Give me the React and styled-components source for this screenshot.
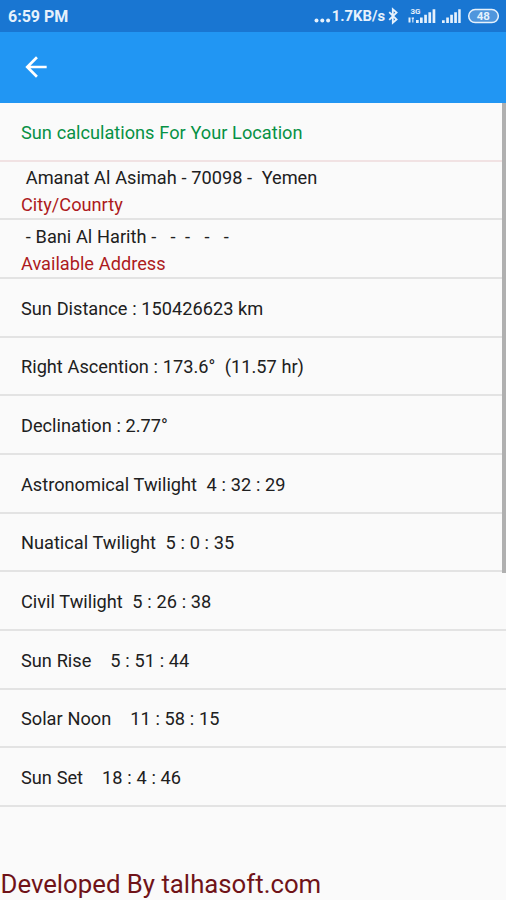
import React from 'react';
import styled, {createGlobalStyle} from 'styled-components';


const GlobalStyle = createGlobalStyle`
    body {
        margin: 0;
        background-color: #fafafa;
        font-family: Roboto, 'Liberation Sans', sans-serif;
    }
`;

const Screen = styled.div`
    display: flex;
    flex-direction: column;
    height: 900px;
    overflow: hidden;
    background-color: #fafafa;
`;

const StatusBar = styled.div`
    display: flex;
    align-items: center;
    justify-content: space-between;
    box-sizing: border-box;
    height: 32px;
    padding: 0 7px 0 8px;
    background-color: #1976d2;
    color: #e6f1fc;
    font-size: 16px;
    font-weight: 700;
    line-height: 33px;
`;

const StatusIcons = styled.div`
    display: flex;
    align-items: center;
    height: 32px;
`;

const Speed = styled.span`
    font-size: 14.8px;
    margin-right: 2px;
`;

const AppBar = styled.header`
    display: flex;
    align-items: center;
    box-sizing: border-box;
    height: 71px;
    padding: 0 20px 2px 19.5px;
    background-color: #2196f3;
`;

const BackButton = styled.button`
    display: flex;
    padding: 0;
    border: 0;
    background: none;
`;

const Content = styled.main`
    position: relative;
    flex: 1;
`;

const List = styled.ul`
    margin: 0;
    padding: 0;
    list-style: none;
`;

const Row = styled.li`
    display: flex;
    flex-direction: column;
    justify-content: center;
    box-sizing: border-box;
    height: ${({$first}) => $first ? '58.6px' : '58.67px'};
    padding: 2px 21px 0;
    border-bottom: 2px solid ${({$first}) => $first ? '#f1e2e3' : '#e3e3e3'};
`;

const Line = styled.span`
    color: ${({$color}) => $color || '#202020'};
    font-size: 18.2px;
    line-height: 27px;
    word-spacing: 0.25px;
    white-space: pre;
`;

// floats over the list, so the row dividers run to the screen edge
const ScrollThumb = styled.div`
    position: absolute;
    top: 0;
    right: 0;
    width: 4px;
    height: 470px;
    background-color: #b0b0b0;
`;

const Footer = styled.footer`
    height: 31px;
    padding-left: 0.5px;
    color: #701318;
    font-size: 25.75px;
    line-height: 31px;
    white-space: pre;
`;

const BackArrow = () => {
    return (
        <svg width="32" height="32" viewBox="0 0 24 24" fill="#fff">
            <path d="M20 11H7.83l5.59-5.59L12 4l-8 8 8 8 1.41-1.41L7.83 13H20v-2z" />
        </svg>
    )
}

const Dots = () => {
    return (
        <svg width="18" height="32" viewBox="0 0 18 32" fill="#e6f1fc">
            <circle cx="2.5" cy="20.5" r="2" />
            <circle cx="8.3" cy="20.5" r="2" />
            <circle cx="14.1" cy="20.5" r="2" />
        </svg>
    )
}

const Indicators = () => {
    return (
        <svg width="112" height="32" viewBox="387 0 112 32" fill="#e6f1fc">
            <path
                d="M389.2 12.2l7.4 7.3-3.8 3.3V9.2l3.8 3.3-7.4 7.3"
                fill="none"
                stroke="#e6f1fc"
                strokeWidth="1.8"
            />
            <text x="410.5" y="14" fontSize="8" fontWeight="700">3G</text>
            <path d="M408.5 17.5h2v5h-2zM411.7 17.5h2.3v1.2h-.6v3.8h-1.1v-3.8h-.6z" />
            <path d="M416 20h2.7v3H416zM420 17.5h2.7V23H420zM424.2 14.8h2.7V23h-2.7zM428.4 12.2h2.7V23h-2.7zM432.6 9.3h2.7V23h-2.7z" />
            <path d="M442 20.2h2.7V23H442zM446.2 17.5h2.7V23h-2.7zM450.2 14.8h2.7V23h-2.7zM454.2 12.2h2.7V23h-2.7zM458.2 9.3h2.5V23h-2.5z" />
            <rect
                x="468.7"
                y="9.6"
                width="29.6"
                height="13"
                rx="6.5"
                fill="#4f96dd"
                stroke="#e6f1fc"
                strokeWidth="1.5"
            />
            <text x="483.3" y="20" fontSize="11.5" fontWeight="700" textAnchor="middle">48</text>
        </svg>
    )
}

const RED = '#ad1a20';
const GREEN = '#079145';

const rows = [
    [{text: 'Sun calculations For Your Location', color: GREEN}],
    [{text: ' Amanat Al Asimah - 70098 -  Yemen'}, {text: 'City/Counrty', color: RED}],
    [{text: ' - Bani Al Harith -   -  -   -   -'}, {text: 'Available Address', color: RED}],
    [{text: 'Sun Distance : 150426623 km'}],
    [{text: 'Right Ascention : 173.6°  (11.57 hr)'}],
    [{text: 'Declination : 2.77°'}],
    [{text: 'Astronomical Twilight  4 : 32 : 29'}],
    [{text: 'Nuatical Twilight  5 : 0 : 35'}],
    [{text: 'Civil Twilight  5 : 26 : 38'}],
    [{text: 'Sun Rise    5 : 51 : 44'}],
    [{text: 'Solar Noon    11 : 58 : 15'}],
    [{text: 'Sun Set    18 : 4 : 46'}]
];

export default function App() {
    return (
        <Screen>
            <GlobalStyle />
            <StatusBar>
                <span>6:59 PM</span>
                <StatusIcons>
                    <Dots />
                    <Speed>1.7KB/s</Speed>
                    <Indicators />
                </StatusIcons>
            </StatusBar>
            <AppBar>
                <BackButton aria-label="Back">
                    <BackArrow />
                </BackButton>
            </AppBar>
            <Content>
                <List>
                    {
                        rows.map((lines, i) => (
                            <Row key={i} $first={i === 0}>
                                {lines.map(({text, color}) => (
                                    <Line key={text} $color={color}>{text}</Line>
                                ))}
                            </Row>
                        ))
                    }
                </List>
                <ScrollThumb />
            </Content>
            <Footer>Developed By talhasoft.com</Footer>
        </Screen>
    );
}
